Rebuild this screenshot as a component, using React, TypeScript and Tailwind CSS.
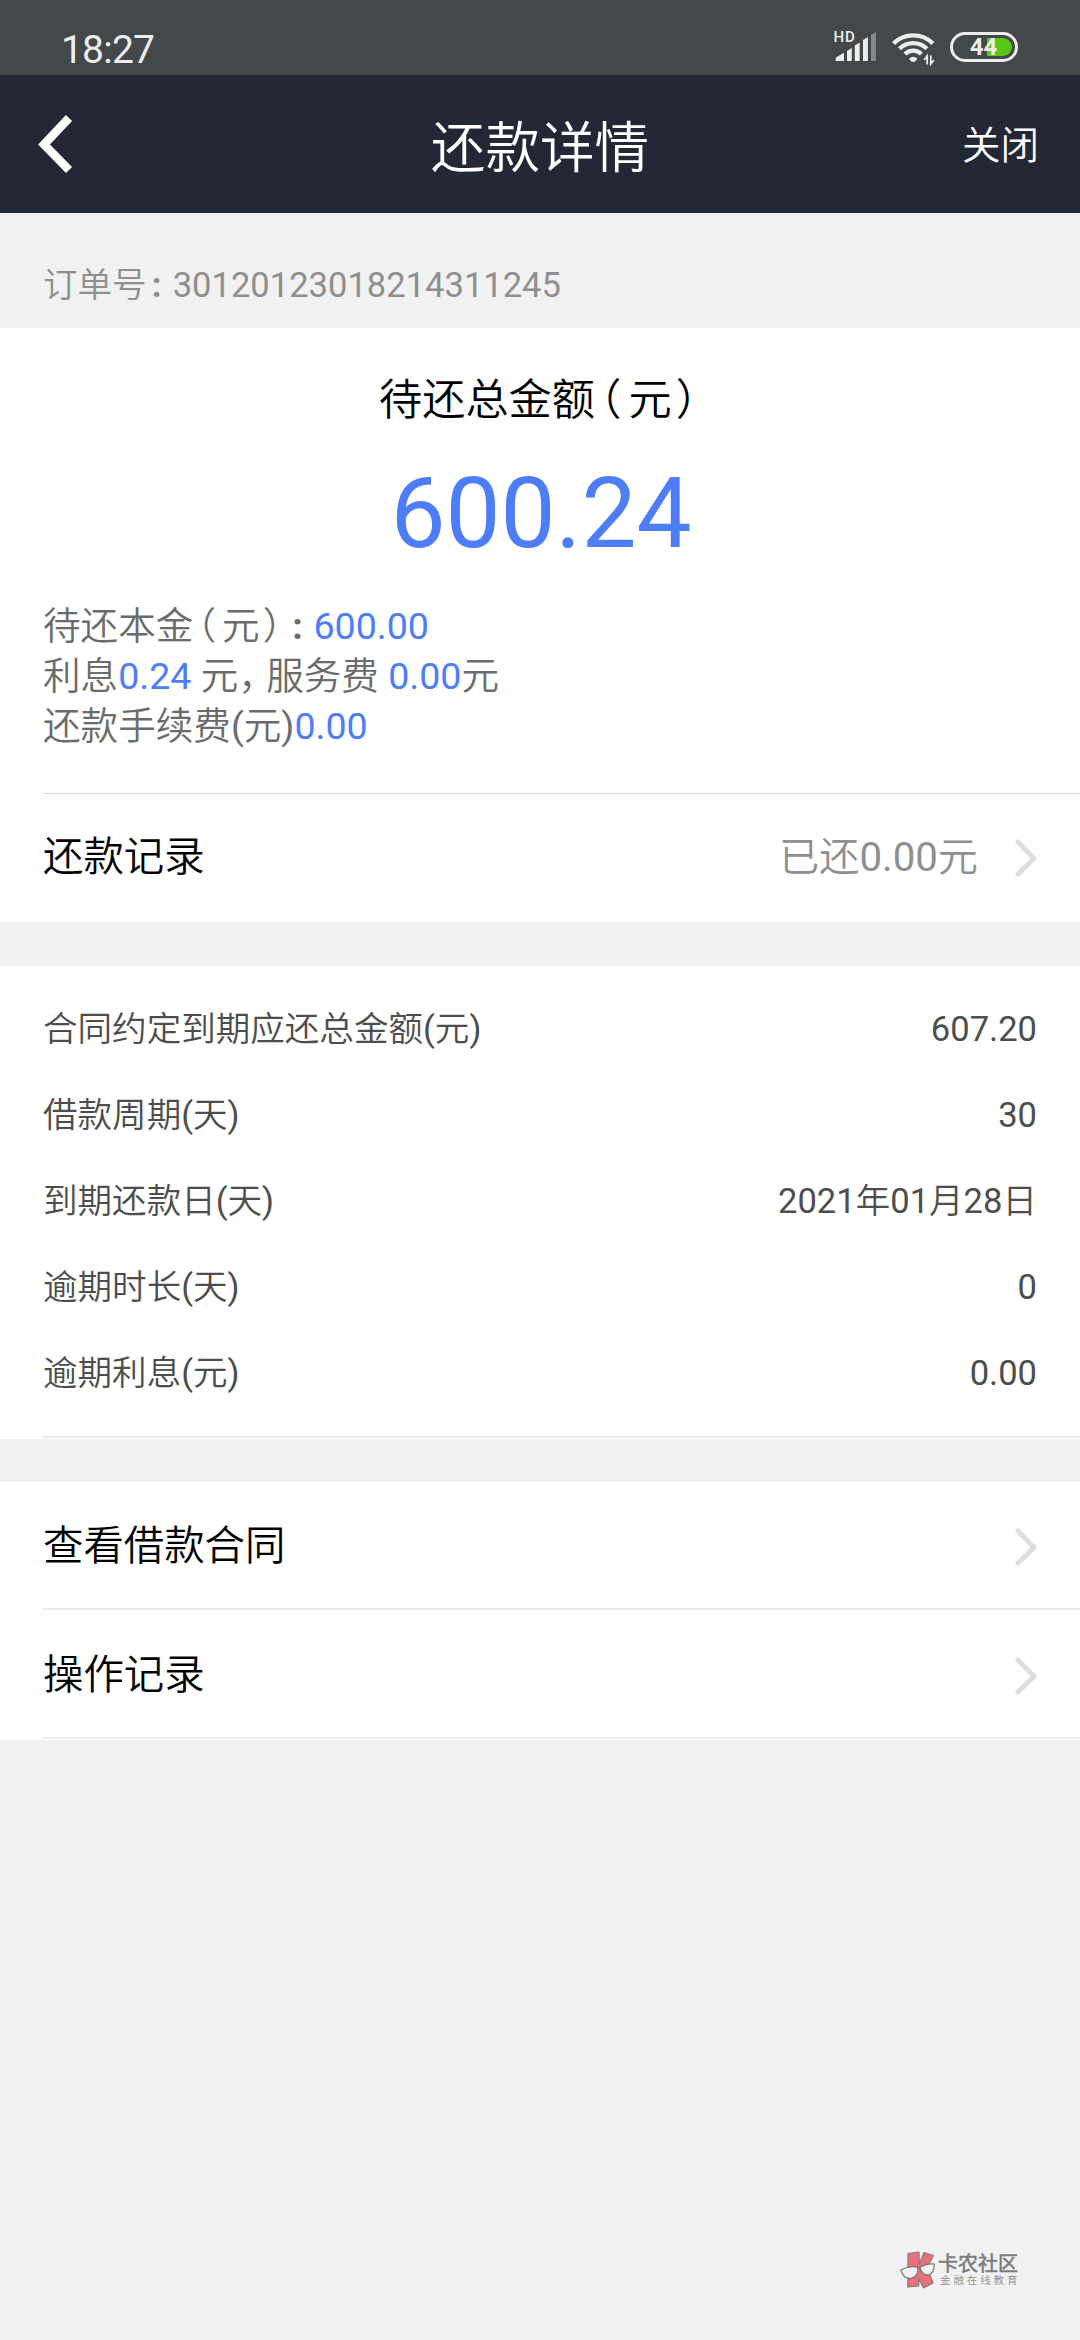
import type { ReactNode } from "react";

const details = [
  ["合同约定到期应还总金额(元)", "607.20"],
  ["借款周期(天)", "30"],
  ["到期还款日(天)", "2021年01月28日"],
  ["逾期时长(天)", "0"],
  ["逾期利息(元)", "0.00"],
];

function StatusBar() {
  return (
    <div className="h-[75px] bg-[#43484b] flex justify-between text-[#ededed]">
      <div className="pl-[61px] pt-[29px] text-[39px] leading-[42px] tracking-[-0.8px]">18:27</div>
      <div className="flex pr-[62px] pt-[30px]">
        <svg className="-mt-[8px]" width="44" height="42" viewBox="832 22 44 42" fill="#ededed">
          <text x="832.5" y="42" fontSize="15" fontWeight="500" letterSpacing="0.8" fontFamily="Roboto">HD</text>
          <path d="M834.7 61v-2.500q0-1 1-1.600l7.300-4.200V61z" />
          <path d="M846 61V51l4.800-3v13z" />
          <path d="M853.800 61V45.500l4.900-3V61z" />
          <path d="M862 61V40l4.900-3V61z" />
          <path d="M870 61V35l4.900-3V61z" fill="#85888c" />
        </svg>
        <svg className="ml-[14px]" width="46" height="36" viewBox="890 30 46 36" fill="none" stroke="#ededed">
          <path d="M892.500 43.500a28 28 0 0 1 39.400 0" strokeWidth="4.400" />
          <path d="M898.500 48.700a19.500 19.500 0 0 1 27.400 0" strokeWidth="4.200" />
          <path d="M904 54a11.700 11.700 0 0 1 16.400 0" strokeWidth="4.200" />
          <path d="M908 58.500q4.200-3.400 8.400 0l-1.700 2.500q-2.500 2-5 0z" fill="#ededed" stroke="none" />
          <path d="M926.200 64.500v-8.500l-3 4M929.800 55.500v8.500l3-4" strokeWidth="1.800" />
        </svg>
        <div className="relative ml-[13px] mt-[2px] w-[68px] h-[30px] rounded-full border-[3px] border-[#ededed]">
          <div className="absolute right-[3px] top-[3px] h-[18px] w-[25px] rounded-r-full bg-[#57c718]" />
          <div className="absolute inset-0 text-center font-bold text-[24px] leading-[25px] pr-[1px]">44</div>
        </div>
      </div>
    </div>
  );
}

function Chevron() {
  return (
    <svg className="block" width="22" height="40" viewBox="0 0 22 40" fill="none" stroke="#dedede" strokeWidth="5" strokeLinecap="round" strokeLinejoin="round">
      <path d="M3 4l16 16.500L3 36" />
    </svg>
  );
}

function Blue({ children }: { children: ReactNode }) {
  return <span className="text-[#4e7dfa]">{children}</span>;
}

function LinkRow({ label, value }: { label: string; value?: string }) {
  return (
    <div className="h-[128px] flex items-center justify-between pr-[43px]">
      <div className="text-[40.400px] leading-[60px] text-black">{label}</div>
      <div className="flex items-center">
        {value && <div className="text-[40.200px] leading-[60px] text-[#8f8f8f] mr-[37px]">{value}</div>}
        <Chevron />
      </div>
    </div>
  );
}

function Watermark() {
  return (
    <div className="absolute left-[899px] top-[2250px] flex">
      <svg width="38" height="40" viewBox="0 0 38 40" strokeLinejoin="round">
        <path d="M9 3.500L20 2l.3 12L25 2.500l9.500 3-6.500 12 6 15.500-9.500 5-5-9.500 .3 7.500-11 1z" fill="#e8707a" stroke="#8a7a7c" strokeWidth="1.200" />
        <path d="M1.800 20q8-4.500 17-2.800 1 9-6 11Q5 30 1.800 20zM20.800 17.500q7-4.500 14.500-3.500 0 9-5.500 11-7 .5-9-7.500z" fill="#f1f1f1" stroke="#777" strokeWidth="1.200" />
      </svg>
      <div className="ml-[1px] pt-[3px]">
        <div className="text-[20px] leading-[22px] font-bold text-[#7d7d7d] whitespace-nowrap">卡农社区</div>
        <div className="text-[10.500px] leading-[12px] tracking-[2.900px] text-[#8f8f8f] pl-[2px] whitespace-nowrap">金融在线教育</div>
      </div>
    </div>
  );
}

function Punct({ children, className }: { children: string; className: string }) {
  return <span className={`[font-feature-settings:'halt'] ${className}`}>{children}</span>;
}

export default function App() {
  return (
    <div className="relative w-[1080px] h-[2340px] overflow-hidden bg-[#f1f1f1] font-[Roboto,'Noto_Sans_CJK_SC_DemiLight','Noto_Sans_CJK_SC',sans-serif] font-normal [text-spacing-trim:space-all] [font-kerning:none]">
      <StatusBar />
      <header className="h-[138px] bg-[#242735] text-white grid grid-cols-3 items-center">
        <svg className="ml-[36px]" width="40" height="64" viewBox="0 0 40 64" fill="none" stroke="#fff" strokeWidth="8.500">
          <path d="M33 6L8 32.500 33 58" />
        </svg>
        <h1 className="pt-[7px] text-center text-[54.600px] leading-[60px]">还款详情</h1>
        <div className="pt-[3px] text-right pr-[41px] text-[38.500px] leading-[50px]">关闭</div>
      </header>

      <div className="h-[115px] pl-[43px] pt-[42px] text-[34.560px] leading-[60px] text-[#8f8f8f]">
        订单号<span className="inline-block w-[26px] pl-[5px] font-bold">:</span>30120123018214311245
      </div>

      <section className="bg-white h-[594px]">
        <div className="h-[101px] pt-[43px] pl-[379px] text-[43.200px] leading-[60px] text-black whitespace-nowrap">
          待还总金额<Punct className="ml-[5px] mr-[7px]">（</Punct>元<Punct className="ml-[4px]">）</Punct>
        </div>
        <div className="h-[130px] pt-[25px] pl-[2px] text-center text-[98px] leading-[120px] text-[#4e7dfa]">600.24</div>
        <div className="pl-[43px] pt-[42px] h-[234px] text-[37.600px] leading-[50px] text-[#6b6b6b] whitespace-nowrap">
          <div>待还本金<Punct className="ml-[4px] mr-[6px]">（</Punct>元<Punct className="ml-[3px]">）</Punct><span className="inline-block w-[32px] text-center font-bold">:</span><Blue>600.00</Blue></div>
          <div>利息<Blue>0.24</Blue> 元<Punct className="mr-[9px]">，</Punct>服务费 <Blue>0.00</Blue>元</div>
          <div>还款手续费(元)<Blue>0.00</Blue></div>
        </div>
        <div className="ml-[43px] border-t border-[#d9d9d9]">
          <LinkRow label="还款记录" value="已还0.00元" />
        </div>
      </section>

      <section className="mt-[44px] bg-white h-[473px] pt-[20px] flex flex-col justify-between pb-px">
        <div className="px-[43px]">
          {details.map(([label, value]) => (
            <div key={label} className="h-[86px] flex items-center justify-between text-[34.560px] leading-[60px] text-[#4d4d4d]">
              <span>{label}</span>
              <span>{value}</span>
            </div>
          ))}
        </div>
        <div className="ml-[43px] h-[2px] bg-[#ebebeb]" />
      </section>

      <section className="mt-[43px] bg-white pl-[43px] h-[258px]">
        <div className="h-[128px] pt-px border-b-2 border-[#ebebeb]"><LinkRow label="查看借款合同" /></div>
        <div className="h-[129px] pt-[2px] border-b-2 border-[#ebebeb]"><LinkRow label="操作记录" /></div>
      </section>

      <Watermark />
    </div>
  );
}
